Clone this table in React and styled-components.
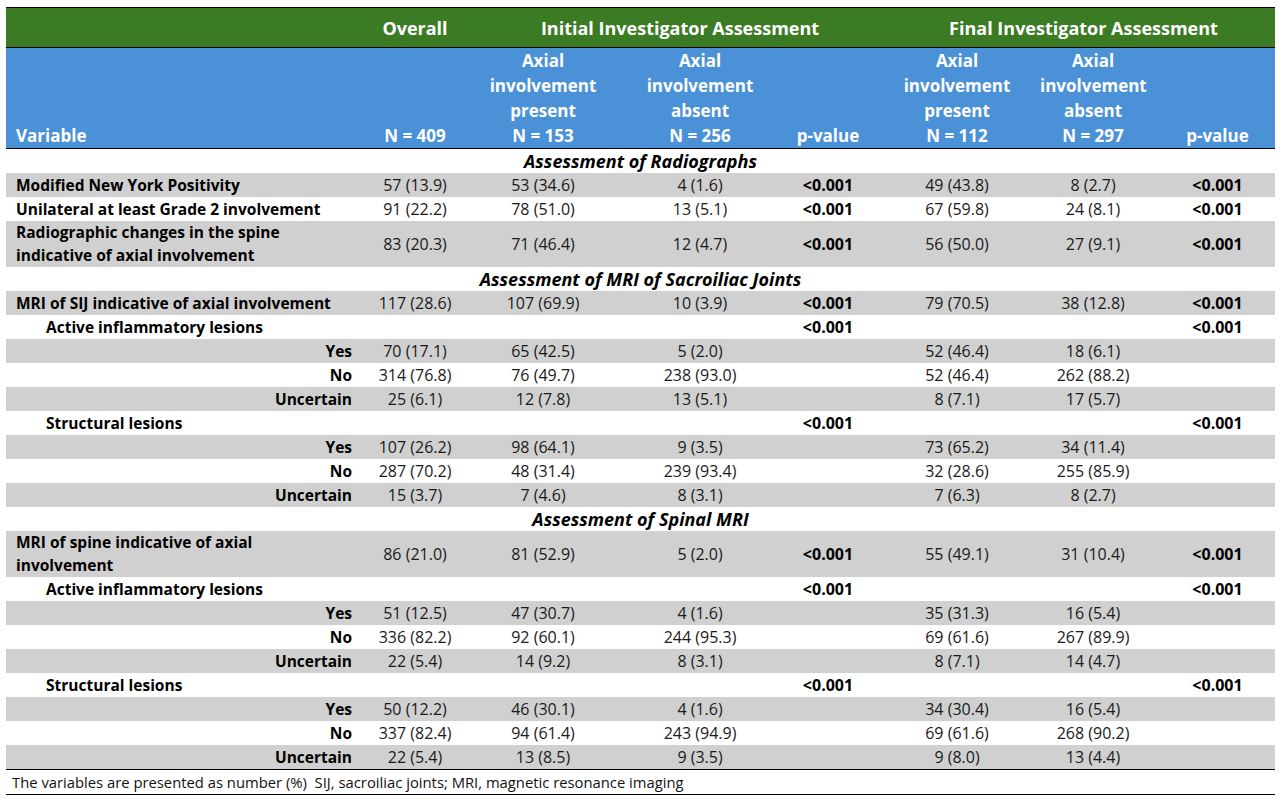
import React from "react";
import styled, { createGlobalStyle, css } from "styled-components";

const GlobalStyle = createGlobalStyle`
  html, body { margin: 0; padding: 0; background: #ffffff; }
  body { font-family: "Open Sans", Lato, "Liberation Sans", sans-serif; color: #111; }
`;

const COLS = "356px 106px 150px 164px 92px 166px 106px 129px";

const Page = styled.div`
  padding: 7px 0 0 6px;
  width: 1269px;
`;

const Table = styled.div`
  width: 1269px;
  display: flex;
  flex-direction: column;
`;

const GroupHeader = styled.div`
  display: grid;
  grid-template-columns: ${COLS};
  height: 39px;
  background: #3b7b24;
  border-top: 1px solid #000;
  border-bottom: 1px solid #000;
  color: #fff;
  font-weight: 700;
  font-size: 18px;
  align-items: center;
`;

const GroupCell = styled.div`
  grid-column: span ${(p) => p.span || 1};
  text-align: center;
  padding-left: ${(p) => p.shift || 0}px;
  white-space: nowrap;
`;

const SubHeader = styled.div`
  display: grid;
  grid-template-columns: ${COLS};
  height: 100px;
  background: #4a91d8;
  border-bottom: 1px solid #000;
  color: #fff;
  font-weight: 700;
  font-size: 17px;
  line-height: 25px;
  align-items: end;
`;

const SubCell = styled.div`
  text-align: ${(p) => (p.left ? "left" : "center")};
  padding-left: ${(p) => (p.left ? 10 : p.shift || 0)}px;
  white-space: nowrap;
`;

const SectionRow = styled.div`
  height: 24px;
  display: flex;
  align-items: center;
  justify-content: center;
  font-weight: 700;
  font-style: italic;
  font-size: 18px;
  color: #000;
`;

const Row = styled.div`
  display: grid;
  grid-template-columns: ${COLS};
  height: ${(p) => (p.tall ? 46 : 24)}px;
  background: ${(p) => (p.shade ? "#d0d0d0" : "#ffffff")};
  align-items: center;
`;

const Label = styled.div`
  font-weight: 700;
  font-size: 15.5px;
  line-height: 23px;
  color: #000;
  white-space: nowrap;
  ${(p) =>
    p.level === 2
      ? css`
          text-align: right;
          padding-right: 10px;
        `
      : css`
          text-align: left;
          padding-left: ${p.level === 1 ? 40 : 10}px;
        `}
`;

const Cell = styled.div`
  text-align: center;
  font-weight: ${(p) => (p.bold ? 700 : 400)};
  font-size: ${(p) => (p.bold ? 16 : 16)}px;
  color: ${(p) => (p.bold ? "#000" : "#1a1a1a")};
  padding-left: ${(p) => p.shift || 0}px;
  white-space: nowrap;
`;

const Footer = styled.div`
  height: 24px;
  border-top: 1px solid #000;
  border-bottom: 1px solid #000;
  display: flex;
  align-items: center;
  padding-left: 6px;
  font-size: 14.8px;
  color: #111;
  white-space: nowrap;
`;

const sections = [
  {
    title: "Assessment of Radiographs",
    rows: [
      { label: ["Modified New York Positivity"], level: 0, v: ["57 (13.9)", "53 (34.6)", "4 (1.6)", "<0.001", "49 (43.8)", "8 (2.7)", "<0.001"] },
      { label: ["Unilateral at least Grade 2 involvement"], level: 0, v: ["91 (22.2)", "78 (51.0)", "13 (5.1)", "<0.001", "67 (59.8)", "24 (8.1)", "<0.001"] },
      { label: ["Radiographic changes in the spine", "indicative of axial involvement"], level: 0, v: ["83 (20.3)", "71 (46.4)", "12 (4.7)", "<0.001", "56 (50.0)", "27 (9.1)", "<0.001"] },
    ],
  },
  {
    title: "Assessment of MRI of Sacroiliac Joints",
    rows: [
      { label: ["MRI of SIJ indicative of axial involvement"], level: 0, v: ["117 (28.6)", "107 (69.9)", "10 (3.9)", "<0.001", "79 (70.5)", "38 (12.8)", "<0.001"] },
      { label: ["Active inflammatory lesions"], level: 1, v: ["", "", "", "<0.001", "", "", "<0.001"] },
      { label: ["Yes"], level: 2, v: ["70 (17.1)", "65 (42.5)", "5 (2.0)", "", "52 (46.4)", "18 (6.1)", ""] },
      { label: ["No"], level: 2, v: ["314 (76.8)", "76 (49.7)", "238 (93.0)", "", "52 (46.4)", "262 (88.2)", ""] },
      { label: ["Uncertain"], level: 2, v: ["25 (6.1)", "12 (7.8)", "13 (5.1)", "", "8 (7.1)", "17 (5.7)", ""] },
      { label: ["Structural lesions"], level: 1, v: ["", "", "", "<0.001", "", "", "<0.001"] },
      { label: ["Yes"], level: 2, v: ["107 (26.2)", "98 (64.1)", "9 (3.5)", "", "73 (65.2)", "34 (11.4)", ""] },
      { label: ["No"], level: 2, v: ["287 (70.2)", "48 (31.4)", "239 (93.4)", "", "32 (28.6)", "255 (85.9)", ""] },
      { label: ["Uncertain"], level: 2, v: ["15 (3.7)", "7 (4.6)", "8 (3.1)", "", "7 (6.3)", "8 (2.7)", ""] },
    ],
  },
  {
    title: "Assessment of Spinal MRI",
    rows: [
      { label: ["MRI of spine indicative of axial", "involvement"], level: 0, v: ["86 (21.0)", "81 (52.9)", "5 (2.0)", "<0.001", "55 (49.1)", "31 (10.4)", "<0.001"] },
      { label: ["Active inflammatory lesions"], level: 1, v: ["", "", "", "<0.001", "", "", "<0.001"] },
      { label: ["Yes"], level: 2, v: ["51 (12.5)", "47 (30.7)", "4 (1.6)", "", "35 (31.3)", "16 (5.4)", ""] },
      { label: ["No"], level: 2, v: ["336 (82.2)", "92 (60.1)", "244 (95.3)", "", "69 (61.6)", "267 (89.9)", ""] },
      { label: ["Uncertain"], level: 2, v: ["22 (5.4)", "14 (9.2)", "8 (3.1)", "", "8 (7.1)", "14 (4.7)", ""] },
      { label: ["Structural lesions"], level: 1, v: ["", "", "", "<0.001", "", "", "<0.001"] },
      { label: ["Yes"], level: 2, v: ["50 (12.2)", "46 (30.1)", "4 (1.6)", "", "34 (30.4)", "16 (5.4)", ""] },
      { label: ["No"], level: 2, v: ["337 (82.4)", "94 (61.4)", "243 (94.9)", "", "69 (61.6)", "268 (90.2)", ""] },
      { label: ["Uncertain"], level: 2, v: ["22 (5.4)", "13 (8.5)", "9 (3.5)", "", "9 (8.0)", "13 (4.4)", ""] },
    ],
  },
];

const pCols = [3, 6];

export default function App() {
  return (
    <>
      <GlobalStyle />
      <Page>
        <Table>
          <GroupHeader>
            <GroupCell />
            <GroupCell>Overall</GroupCell>
            <GroupCell span={3} shift={18}>Initial Investigator Assessment</GroupCell>
            <GroupCell span={3} shift={18}>Final Investigator Assessment</GroupCell>
          </GroupHeader>
          <SubHeader>
            <SubCell left>Variable</SubCell>
            <SubCell>N = 409</SubCell>
            <SubCell>Axial<br />involvement<br />present<br />N = 153</SubCell>
            <SubCell>Axial<br />involvement<br />absent<br />N = 256</SubCell>
            <SubCell>p-value</SubCell>
            <SubCell>Axial<br />involvement<br />present<br />N = 112</SubCell>
            <SubCell>Axial<br />involvement<br />absent<br />N = 297</SubCell>
            <SubCell shift={14}>p-value</SubCell>
          </SubHeader>
          {sections.map((s) => (
            <React.Fragment key={s.title}>
              <SectionRow>{s.title}</SectionRow>
              {s.rows.map((r, i) => (
                <Row key={i} shade={i % 2 === 0} tall={r.label.length > 1}>
                  <Label level={r.level}>
                    {r.label.map((l, j) => (
                      <div key={j}>{l}</div>
                    ))}
                  </Label>
                  {r.v.map((val, k) => (
                    <Cell key={k} bold={pCols.includes(k)} shift={k === 6 ? 14 : 0}>
                      {val}
                    </Cell>
                  ))}
                </Row>
              ))}
            </React.Fragment>
          ))}
          <Footer>The variables are presented as number (%)&nbsp; SIJ, sacroiliac joints; MRI, magnetic resonance imaging</Footer>
        </Table>
      </Page>
    </>
  );
}
